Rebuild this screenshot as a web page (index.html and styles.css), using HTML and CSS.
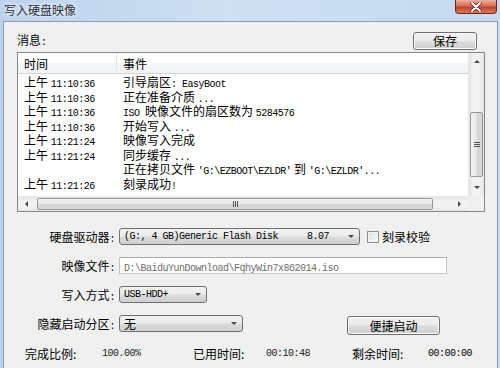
FILE: index.html
```html
<!DOCTYPE html>
<html lang="zh-CN">
<head>
    <meta charset="UTF-8">
    <title>写入硬盘映像</title>
    <link rel="stylesheet" href="styles.css">
</head>
<body>
<div class="window">
    <div class="titlebar">
        <span class="title">写入硬盘映像</span>
        <span class="close">
            <svg width="12" height="10" viewBox="0 0 12 10">
                <path d="M2 1 L10 9 M10 1 L2 9" stroke="#5a1a10" stroke-width="3.4" stroke-linecap="round"/>
                <path d="M2 1 L10 9 M10 1 L2 9" stroke="#fff" stroke-width="2" stroke-linecap="round"/>
            </svg>
        </span>
    </div>

    <div class="client">
        <div class="msg-head">
            <span class="msg-label">消息<span class="a">:</span></span>
            <button class="btn save">保存</button>
        </div>

        <div class="list">
            <div class="list-body">
                <div class="list-head">
                    <span class="c1">时间</span>
                    <span class="c2">事件</span>
                </div>
                <div class="row"><span class="c1">上午 <span class="a">11:10:36</span></span><span class="c2">引导扇区<span class="a">: EasyBoot</span></span></div>
                <div class="row"><span class="c1">上午 <span class="a">11:10:36</span></span><span class="c2">正在准备介质 <span class="a">...</span></span></div>
                <div class="row"><span class="c1">上午 <span class="a">11:10:36</span></span><span class="c2"><span class="a">ISO </span>映像文件的扇区数为 <span class="a">5284576</span></span></div>
                <div class="row"><span class="c1">上午 <span class="a">11:10:36</span></span><span class="c2">开始写入 <span class="a">...</span></span></div>
                <div class="row"><span class="c1">上午 <span class="a">11:21:24</span></span><span class="c2">映像写入完成</span></div>
                <div class="row"><span class="c1">上午 <span class="a">11:21:24</span></span><span class="c2">同步缓存 <span class="a">...</span></span></div>
                <div class="row"><span class="c1"></span><span class="c2">正在拷贝文件 <span class="a">'G:\EZBOOT\EZLDR'</span> 到 <span class="a">'G:\EZLDR'...</span></span></div>
                <div class="row"><span class="c1">上午 <span class="a">11:21:26</span></span><span class="c2">刻录成功<span class="a">!</span></span></div>
            </div>
            <div class="vscroll">
                <div class="arrow"><i class="tri up"></i></div>
                <div class="space"></div>
                <div class="thumb v"><span class="grip-v"></span></div>
                <div class="fill"></div>
                <div class="arrow"><i class="tri down"></i></div>
            </div>
            <div class="hscroll">
                <div class="arrow"><i class="tri left"></i></div>
                <div class="thumb h"><span class="grip-h"></span></div>
                <div class="fill"></div>
                <div class="arrow"><i class="tri right"></i></div>
            </div>
            <div class="corner"></div>
        </div>

        <div class="form">
            <label>硬盘驱动器<span class="a">:</span></label>
            <div class="field">
                <div class="combo drive">
                    <span class="a">(G:, 4 GB)Generic Flash Disk</span>
                    <span class="a ver">8.07</span>
                    <i class="tri down combo-arrow"></i>
                </div>
                <span class="check"></span>
                <span class="check-label">刻录校验</span>
            </div>

            <label>映像文件<span class="a">:</span></label>
            <div class="field">
                <div class="textbox"><span class="a">D:\BaiduYunDownload\FqhyWin7x862014.iso</span></div>
            </div>

            <label>写入方式<span class="a">:</span></label>
            <div class="field">
                <div class="combo mode">
                    <span class="a">USB-HDD+</span>
                    <i class="tri down combo-arrow"></i>
                </div>
            </div>

            <label>隐藏启动分区<span class="a">:</span></label>
            <div class="field top">
                <div class="combo hidden-part">
                    <span>无</span>
                    <i class="tri down combo-arrow"></i>
                </div>
                <button class="btn quick">便捷启动</button>
            </div>
        </div>

        <div class="status">
            <span class="s1">完成比例:</span>
            <span class="s2 a">100.00%</span>
            <span class="s3">已用时间:</span>
            <span class="s4 a">00:10:48</span>
            <span class="s5">剩余时间:</span>
            <span class="s6 a">00:00:00</span>
        </div>
    </div>
</div>
</body>
</html>
```

FILE: styles.css
```css
* {
    box-sizing: border-box;
}
body {
    margin: 0;
    font-family: "Noto Sans CJK SC", sans-serif;
    font-size: 12px;
    color: #000;
    background: #c4d8ee;
}
.window {
    width: 500px;
    height: 368px;
    overflow: hidden;
    padding: 0 2px 0 3px;
    background: linear-gradient(90deg, #bcd2ec, #cfe0f3 45%, #c6daf0);
    display: flex;
    flex-direction: column;
}
.titlebar {
    height: 21px;
    display: flex;
    justify-content: space-between;
    align-items: flex-start;
}
.title {
    margin: 3px 0 0 1px;
    line-height: 14px;
    color: #1e2d3d;
    text-shadow: 0 0 6px #fff, 0 0 3px #fff;
}
.close {
    width: 42px;
    height: 14px;
    margin-right: 1px;
    border: 1px solid #6c2a1f;
    border-top: none;
    border-radius: 0 0 4px 4px;
    background: linear-gradient(#eab0a2, #d36a53 45%, #c1432c 55%, #d9765c);
    display: flex;
    align-items: center;
    justify-content: center;
}
.client {
    flex: 1;
    background: #f0f0f0;
    border: 1px solid #8b9cb1;
    border-bottom: none;
    padding: 10px 12px 0 13px;
}
.a {
    font-family: "Liberation Mono", monospace;
    font-size: 10px;
    letter-spacing: -0.5px;
}
.msg-head {
    height: 18px;
    display: flex;
    justify-content: space-between;
    align-items: flex-end;
    padding-right: 8px;
}
.msg-label {
    line-height: 14px;
}
.btn {
    font-family: "Noto Sans CJK SC", sans-serif;
    font-size: 12px;
    color: #000;
    padding: 0;
    border: 1px solid #707070;
    border-radius: 3px;
    background: linear-gradient(#f2f2f2, #ebebeb 48%, #dddddd 52%, #cfcfcf);
    box-shadow: inset 0 0 0 1px #fcfcfc;
    line-height: 14px;
}
.save {
    width: 64px;
    height: 18px;
}

/* message list */
.list {
    margin-top: 2px;
    height: 160px;
    border: 1px solid #828790;
    background: #fff;
    display: grid;
    grid-template-columns: 1fr 16px;
    grid-template-rows: 143px 15px;
}
.list-body {
    overflow: hidden;
}
.list-head {
    height: 21px;
    display: flex;
    align-items: center;
    background: linear-gradient(#ffffff, #ffffff 50%, #f4f5f7 51%, #f1f2f4);
    border-bottom: 1px solid #d5d5d5;
    margin-bottom: 1px;
}
.list-head .c1 {
    border-right: 1px solid #e3e5e8;
    height: 100%;
    display: flex;
    align-items: center;
}
.c1 {
    width: 99px;
    padding-left: 6px;
    flex-shrink: 0;
}
.c2 {
    padding-left: 6px;
    white-space: pre;
}
.row {
    display: flex;
    height: 14.5px;
    line-height: 14.5px;
    white-space: nowrap;
}
.vscroll, .hscroll {
    background: linear-gradient(90deg, #e3e3e3, #f2f2f2 30%, #f2f2f2 70%, #e6e6e6);
    display: flex;
}
.vscroll {
    flex-direction: column;
    border-left: 1px solid #e8e8e8;
}
.hscroll {
    background: linear-gradient(#e3e3e3, #f2f2f2 30%, #f2f2f2 70%, #e6e6e6);
    border-top: 1px solid #e8e8e8;
}
.arrow {
    width: 17px;
    height: 17px;
    flex-shrink: 0;
    display: flex;
    align-items: center;
    justify-content: center;
}
.hscroll .arrow {
    height: 14px;
}
.vscroll .arrow {
    width: 15px;
}
.space {
    height: 42px;
}
.fill {
    flex: 1;
}
.thumb {
    border: 1px solid #979797;
    border-radius: 2px;
    display: flex;
    align-items: center;
    justify-content: center;
}
.thumb.v {
    height: 65px;
    margin: 0 1px;
    background: linear-gradient(90deg, #f3f3f3, #e8e8e8 50%, #d6d6d6 51%, #d9d9d9);
}
.thumb.h {
    width: 396px;
    margin: 1px 0 1px 2px;
    background: linear-gradient(#f3f3f3, #e8e8e8 50%, #d6d6d6 51%, #d9d9d9);
}
.grip-v {
    width: 6px;
    height: 5px;
    border-top: 1px solid #555;
    border-bottom: 1px solid #555;
    background: linear-gradient(transparent 40%, #555 40%, #555 60%, transparent 60%);
}
.grip-h {
    width: 5px;
    height: 6px;
    border-left: 1px solid #555;
    border-right: 1px solid #555;
    background: linear-gradient(90deg, transparent 40%, #555 40%, #555 60%, transparent 60%);
}
.corner {
    background: #f0f0f0;
}
.tri {
    width: 0;
    height: 0;
    display: block;
}
.tri.up {
    border-left: 3px solid transparent;
    border-right: 3px solid transparent;
    border-bottom: 3px solid #4a4a4a;
}
.tri.down {
    border-left: 3px solid transparent;
    border-right: 3px solid transparent;
    border-top: 3px solid #4a4a4a;
}
.tri.left {
    border-top: 3px solid transparent;
    border-bottom: 3px solid transparent;
    border-right: 3px solid #4a4a4a;
}
.tri.right {
    border-top: 3px solid transparent;
    border-bottom: 3px solid transparent;
    border-left: 3px solid #4a4a4a;
}

/* form */
.form {
    margin-top: 16px;
    display: grid;
    grid-template-columns: 98px 1fr;
    grid-template-rows: 17px 17px 17px 20px;
    column-gap: 4px;
    row-gap: 12px;
}
.form label {
    text-align: right;
    line-height: 17px;
}
.field {
    display: flex;
    align-items: center;
}
.field.top {
    align-items: flex-start;
}
.combo {
    height: 17px;
    border: 1px solid #707070;
    border-radius: 3px;
    background: linear-gradient(#f2f2f2, #ebebeb 48%, #dddddd 52%, #cfcfcf);
    display: flex;
    align-items: center;
    padding-left: 4px;
    position: relative;
    line-height: 15px;
}
.combo-arrow {
    position: absolute;
    right: 5px;
    top: 6px;
    border-left-width: 4px;
    border-right-width: 4px;
    border-top: 4px solid #000;
}
.drive {
    width: 241px;
}
.ver {
    margin-left: 29px;
}
.mode {
    width: 88px;
}
.hidden-part {
    width: 124px;
    height: 17px;
}
.check {
    width: 12px;
    height: 12px;
    margin-left: 7px;
    border: 1px solid #8e8f8f;
    background: linear-gradient(135deg, #dcdcdc, #fbfbfb);
    box-shadow: inset 0 0 0 1px #f4f4f4;
}
.check-label {
    margin-left: 3px;
}
.textbox {
    width: 328px;
    height: 17px;
    border: 1px solid #c5c5c5;
    border-top-color: #abadb3;
    background: #fff;
    color: #6d6d6d;
    padding-left: 4px;
    line-height: 15px;
}
.quick {
    width: 93px;
    height: 19px;
    margin: 1px 0 0 104px;
}

/* status line */
.status {
    margin-top: 12px;
    padding-left: 8px;
    display: flex;
    line-height: 14px;
    white-space: nowrap;
}
.s1 { width: 77px; }
.s2 { width: 91px; color: #222; }
.s3 { width: 73px; }
.s4 { width: 86px; color: #222; }
.s5 { width: 76px; }
```
